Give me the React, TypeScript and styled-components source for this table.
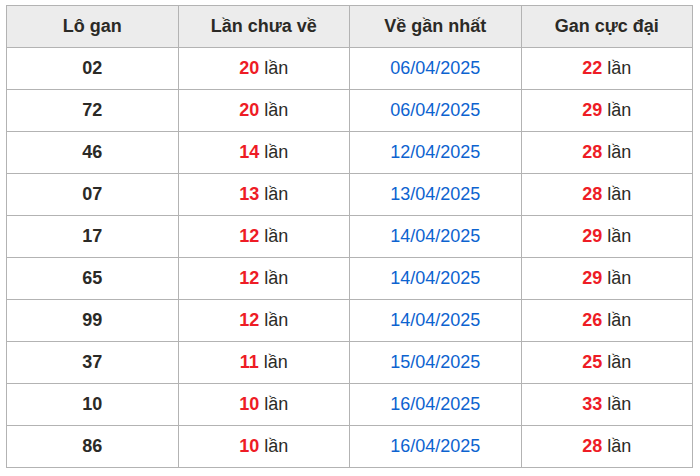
import styled, { createGlobalStyle } from 'styled-components';

const GlobalStyle = createGlobalStyle`
  html, body {
    margin: 0;
    padding: 0;
    background: #fff;
  }
  body {
    font-family: "Liberation Sans", Arial, sans-serif;
  }
`;

const Page = styled.div`
  padding: 5px 7px 0 6px;
`;

const Table = styled.table`
  width: 687px;
  border-collapse: collapse;
  table-layout: fixed;
  font-size: 18px;
  color: #2b2a26;
`;

const Th = styled.th`
  height: 41px;
  padding: 0;
  border: 1px solid #b3b3b3;
  background: #ececec;
  font-weight: bold;
  text-align: center;
`;

const Td = styled.td`
  height: 41px;
  padding: 0;
  border: 1px solid #b3b3b3;
  text-align: center;
`;

const Num = styled.span<{ $tone?: 'dark' | 'red' }>`
  font-weight: bold;
  color: ${p => (p.$tone === 'red' ? '#ee1c25' : '#2b2a26')};
`;

const DateText = styled.span`
  color: #0d63d0;
`;

interface Row {
  lo: string;
  chua: number;
  ngay: string;
  cuc: number;
}

const rows: Row[] = [
  { lo: '02', chua: 20, ngay: '06/04/2025', cuc: 22 },
  { lo: '72', chua: 20, ngay: '06/04/2025', cuc: 29 },
  { lo: '46', chua: 14, ngay: '12/04/2025', cuc: 28 },
  { lo: '07', chua: 13, ngay: '13/04/2025', cuc: 28 },
  { lo: '17', chua: 12, ngay: '14/04/2025', cuc: 29 },
  { lo: '65', chua: 12, ngay: '14/04/2025', cuc: 29 },
  { lo: '99', chua: 12, ngay: '14/04/2025', cuc: 26 },
  { lo: '37', chua: 11, ngay: '15/04/2025', cuc: 25 },
  { lo: '10', chua: 10, ngay: '16/04/2025', cuc: 33 },
  { lo: '86', chua: 10, ngay: '16/04/2025', cuc: 28 },
];

export default function App() {
  return (
    <Page>
      <GlobalStyle />
      <Table>
        <thead>
          <tr>
            <Th>Lô gan</Th>
            <Th>Lần chưa về</Th>
            <Th>Về gần nhất</Th>
            <Th>Gan cực đại</Th>
          </tr>
        </thead>
        <tbody>
          {rows.map(r => (
            <tr key={r.lo}>
              <Td><Num>{r.lo}</Num></Td>
              <Td><Num $tone="red">{r.chua}</Num> lần</Td>
              <Td><DateText>{r.ngay}</DateText></Td>
              <Td><Num $tone="red">{r.cuc}</Num> lần</Td>
            </tr>
          ))}
        </tbody>
      </Table>
    </Page>
  );
}
